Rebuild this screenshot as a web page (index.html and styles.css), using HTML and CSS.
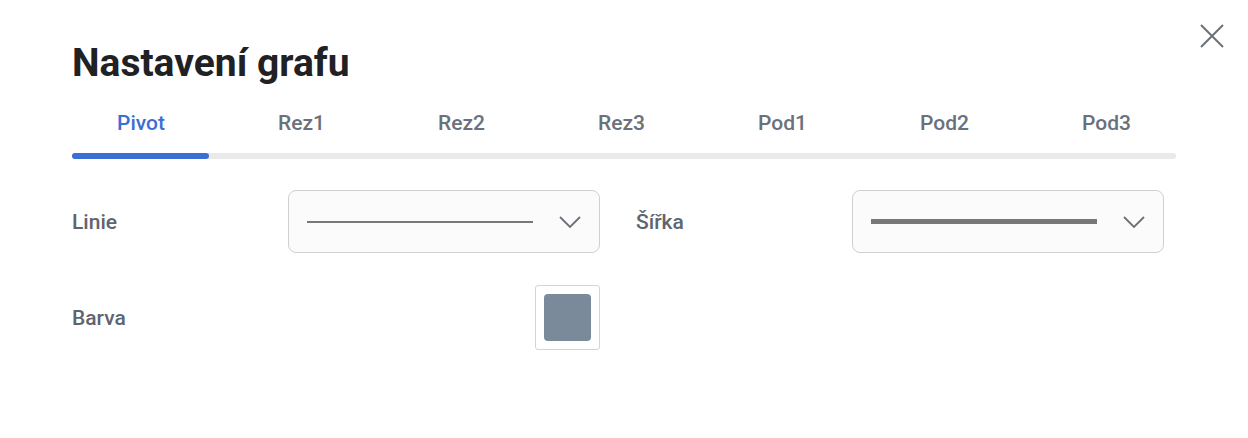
FILE: index.html
```html
<!DOCTYPE html>
<html lang="cs">
<head>
<meta charset="utf-8">
<title>Nastavení grafu</title>
<link rel="stylesheet" href="styles.css">
</head>
<body>
<div class="dialog">
  <button class="close" aria-label="Zavřít">
    <svg width="24" height="24" viewBox="0 0 24 24"><path d="M1 1L23 23M23 1L1 23" stroke="#6b7079" stroke-width="2" fill="none"/></svg>
  </button>
  <h1 class="title">Nastavení grafu</h1>
  <div class="tabs">
    <div class="tab active">Pivot</div>
    <div class="tab">Rez1</div>
    <div class="tab">Rez2</div>
    <div class="tab">Rez3</div>
    <div class="tab">Pod1</div>
    <div class="tab">Pod2</div>
    <div class="tab">Pod3</div>
  </div>
  <div class="track"><div class="indicator"></div></div>
  <div class="form">
    <div class="field">
      <div class="label">Linie</div>
      <div class="select">
        <div class="line thin"></div>
        <svg class="chev" width="22" height="12" viewBox="0 0 22 12"><path d="M1 1L11 11L21 1" stroke="#6b7079" stroke-width="1.8" fill="none"/></svg>
      </div>
    </div>
    <div class="field">
      <div class="label">Šířka</div>
      <div class="select">
        <div class="line thick"></div>
        <svg class="chev" width="22" height="12" viewBox="0 0 22 12"><path d="M1 1L11 11L21 1" stroke="#6b7079" stroke-width="1.8" fill="none"/></svg>
      </div>
    </div>
    <div class="field">
      <div class="label">Barva</div>
      <div class="swatch-cell">
        <div class="swatch"><div class="swatch-color"></div></div>
      </div>
    </div>
  </div>
</div>
</body>
</html>
```
FILE: styles.css
```css
* { box-sizing: border-box; }
html, body { margin: 0; padding: 0; background: #fff; }
body { font-family: Roboto, "Liberation Sans", sans-serif; }
.dialog {
  position: relative;
  width: 1248px;
  height: 438px;
  padding: 36px 72px 0 72px;
}
.close {
  position: absolute;
  top: 24px;
  right: 24px;
  width: 24px;
  height: 24px;
  padding: 0;
  border: 0;
  background: none;
  cursor: pointer;
}
.close svg { display: block; }
.title {
  margin: 0;
  font-size: 39px;
  font-weight: 700;
  color: #1f2125;
  line-height: 54px;
}
.tabs {
  display: flex;
  justify-content: space-between;
  margin-top: 19px;
}
.tab {
  padding: 0 45px;
  font-size: 21px;
  font-weight: 500;
  color: #6b7079;
  line-height: 28px;
}
.tab.active { color: #3b6fd6; }
.track {
  margin-top: 16px;
  height: 6px;
  border-radius: 3px;
  background: #e9eaec;
}
.indicator {
  width: 137px;
  height: 6px;
  border-radius: 3px;
  background: #3b6fd6;
}
.form {
  display: grid;
  grid-template-columns: 216px 312px 252px 312px;
  row-gap: 32px;
  margin-top: 31px;
}
.field { display: contents; }
.field:nth-child(2) .label { margin-left: 36px; }
.label {
  display: flex;
  align-items: center;
  font-size: 21px;
  font-weight: 500;
  color: #60646e;
}
.select {
  height: 63px;
  border: 1px solid #cfd0d3;
  border-radius: 8px;
  background: #fbfbfb;
  display: flex;
  align-items: center;
  padding: 0 18px;
}
.line {
  width: 226px;
  background: #787878;
}
.line.thin { height: 2px; }
.line.thick { height: 5px; }
.chev { margin-left: auto; display: block; }
.swatch-cell {
  display: flex;
  justify-content: flex-end;
}
.swatch {
  width: 65px;
  height: 65px;
  border: 1px solid #d3d4d6;
  border-radius: 3px;
  padding: 8px;
  background: #fff;
}
.swatch-color {
  width: 47px;
  height: 47px;
  border-radius: 4px;
  background: #7a8a9a;
}
```
